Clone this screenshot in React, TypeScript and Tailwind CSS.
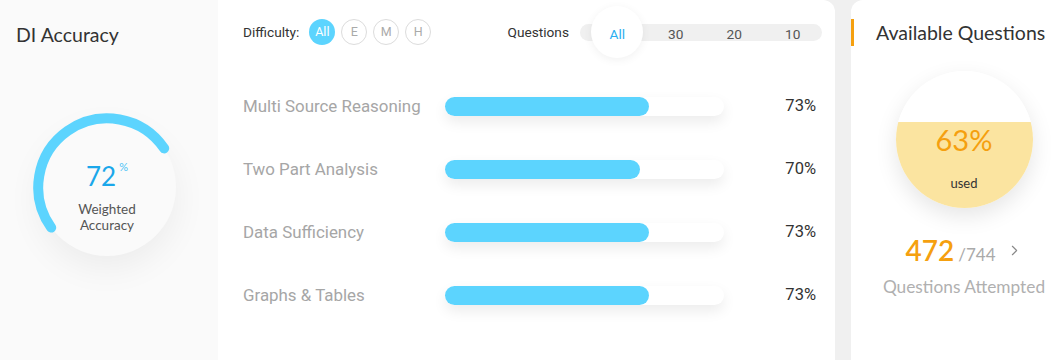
import { ChevronRight } from 'lucide-react'

const nunito = "font-['Lato','Open_Sans',sans-serif]"
const din = "font-['Roboto','Liberation_Sans',sans-serif]"

interface Topic {
  label: string
  value: number
}

const topics: Topic[] = [
  { label: 'Multi Source Reasoning', value: 73 },
  { label: 'Two Part Analysis', value: 70 },
  { label: 'Data Sufficiency', value: 73 },
  { label: 'Graphs & Tables', value: 73 },
]

const Gauge = () => {
  return (
    <div className="relative w-[150px] h-[150px] ml-[32px] mt-[65px]">
      <div className="absolute left-[6px] top-[6px] w-[138px] h-[138px] rounded-full bg-[#fafafa] shadow-[0_12px_34px_rgba(0,0,0,0.06)]" />
      <svg className="absolute inset-0" width="150" height="150" viewBox="0 0 150 150">
        <path
          d="M 19.2 115.6 A 69 69 0 1 1 132.2 36.4"
          fill="none"
          stroke="#5cd4fe"
          strokeWidth="10"
          strokeLinecap="round"
        />
      </svg>
      <div className="absolute inset-0 flex flex-col items-center pt-[49px]">
        <div className="flex items-start text-[#1aa7ea]">
          <span className="text-[26px] leading-[30px]">72</span>
          <span className="text-[11px] leading-[14px] ml-[3px] mt-[-1px] text-[#4cc3f5]">%</span>
        </div>
        <div className="mt-[10px] text-[13.5px] leading-[16px] text-[#555] text-center">
          Weighted
          <br />
          Accuracy
        </div>
      </div>
    </div>
  )
}

export default function App() {
  const levels = ['E', 'M', 'H']
  const counts = ['30', '20', '10']

  return (
    <div className="w-[1063px] h-[360px] flex bg-[#f0f0f0] overflow-hidden">
      {/* DI Accuracy */}
      <div className={`w-[218px] h-full bg-[#fafafa] ${nunito}`}>
        <h2 className="mt-[23px] pl-[16px] text-[19.5px] leading-[24px] text-[#333]">DI Accuracy</h2>
        <Gauge />
      </div>

      {/* Topics */}
      <div className={`w-[617px] h-full bg-white rounded-tr-[12px] ${din}`}>
        <div className="h-[64px] flex items-center pl-[25px] pr-[13px]">
          <span className="text-[13.7px] text-[#333]">Difficulty:</span>
          <div className="flex items-center gap-[6px] ml-[10px]">
            <span className="w-[26px] h-[26px] rounded-full bg-[#5cd4fe] text-white text-[12.5px] flex items-center justify-center">
              All
            </span>
            {levels.map((l) => (
              <span
                key={l}
                className="w-[26px] h-[26px] rounded-full border border-[#dcdcdc] text-[#aaa] text-[12.5px] flex items-center justify-center"
              >
                {l}
              </span>
            ))}
          </div>
          <span className="ml-auto text-[13.7px] text-[#333]">Questions</span>
          <div className="relative ml-[11px] w-[242px] h-[17px] rounded-full bg-[#f0f0f0] grid grid-cols-4 pl-[8px]">
            <div className="absolute left-[11px] top-[-18px] w-[52px] h-[52px] rounded-full bg-white shadow-[0_2px_10px_rgba(0,0,0,0.06)]" />
            <span className="relative flex items-center justify-center text-[13.7px] text-[#2aaef0]">All</span>
            {counts.map((c) => (
              <span key={c} className="relative flex items-center justify-center text-[13.7px] text-[#555]">
                {c}
              </span>
            ))}
          </div>
        </div>

        <div className="mt-[11px] pl-[25px] pr-[19px]">
          {topics.map((t) => (
            <div key={t.label} className="h-[63px] flex items-center">
              <span className="w-[202px] text-[16.9px] text-[#a6a6a6] whitespace-nowrap">{t.label}</span>
              <div className="w-[279px] h-[19px] rounded-full bg-white shadow-[0_6px_14px_rgba(0,0,0,0.08)]">
                <div className="h-full rounded-full bg-[#5cd4fe]" style={{ width: `${t.value}%` }} />
              </div>
              <span className="flex-1 text-right text-[16.5px] text-[#333]">{t.value}%</span>
            </div>
          ))}
        </div>
      </div>

      <div className="w-[16px]" />

      {/* Available Questions */}
      <div className={`flex-1 h-full bg-white rounded-tl-[12px] ${nunito}`}>
        <div className="mt-[19px] h-[27px] border-l-[3px] border-[#f5a00f] pl-[22px] flex items-center">
          <h2 className="text-[19.5px] text-[#333] whitespace-nowrap">Available Questions</h2>
        </div>
        <div className="flex flex-col items-center pl-[14px]">
          <div className="mt-[25px] w-[137px] h-[137px] rounded-full bg-[linear-gradient(to_bottom,#ffffff_37%,#fbe4a0_37%)] shadow-[0_8px_22px_rgba(0,0,0,0.1)] flex flex-col items-center pt-[52px]">
            <span className="text-[29px] leading-[34px] text-[#f5a00f]">63%</span>
            <span className="mt-[18px] text-[13px] leading-[16px] text-[#333]">used</span>
          </div>
          <div className="mt-[26px] flex items-baseline">
            <span className="text-[28px] leading-[32px] font-semibold text-[#f5a00f]">472</span>
            <span className="ml-[4px] text-[17px] text-[#aaa]">/744</span>
            <ChevronRight className="ml-[10px] w-[17px] h-[17px] text-[#888] self-center" strokeWidth={1.6} />
          </div>
          <span className="mt-[9px] text-[17.3px] leading-[20px] text-[#b0b0b0] whitespace-nowrap">Questions Attempted</span>
        </div>
      </div>
    </div>
  )
}
